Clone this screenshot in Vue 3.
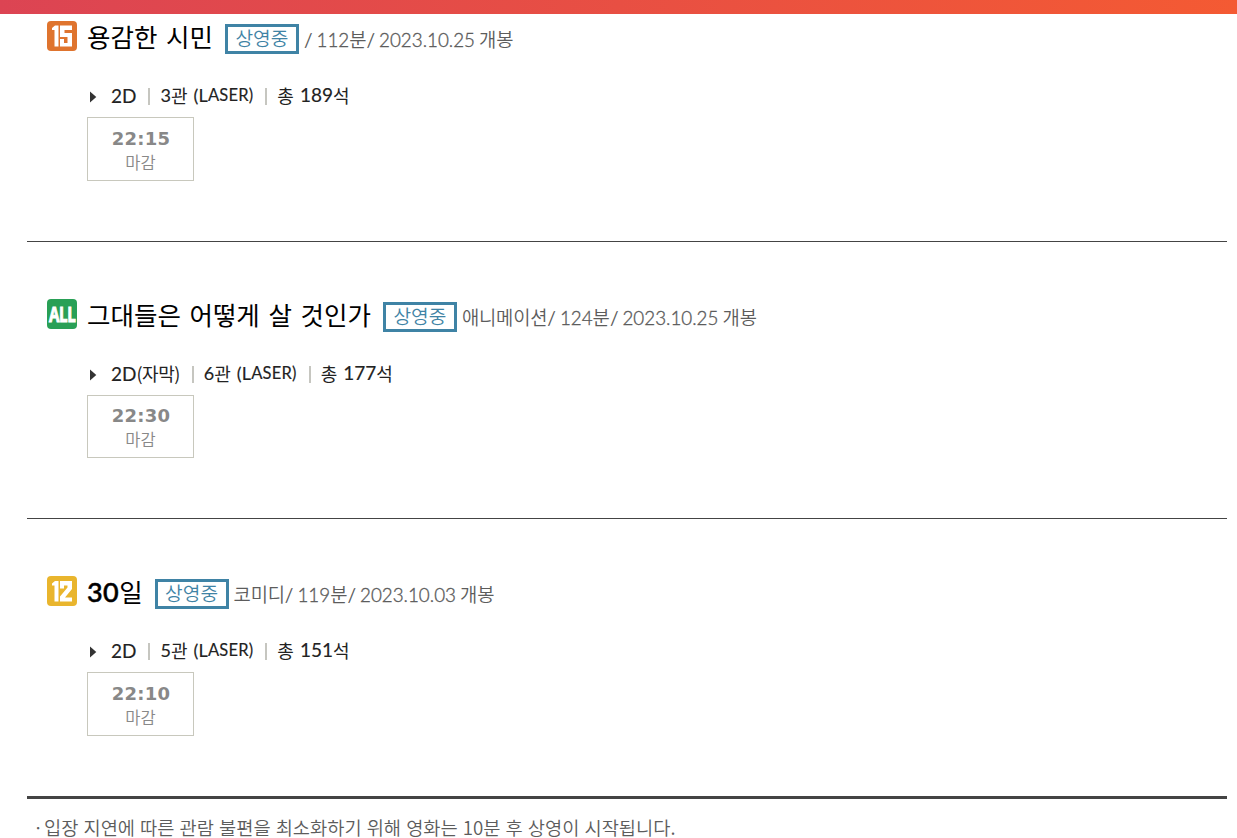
<script setup>
const movies = [
  { id: 'citizen', rate: '15', title: '용감한 시민', genre: '', minutes: '112', date: '2023.10.25', type: '2D', sub: '', hall: '3', seats: '189', time: '22:15' },
  { id: 'heron', rate: 'ALL', title: '그대들은 어떻게 살 것인가', genre: '애니메이션', minutes: '124', date: '2023.10.25', type: '2D', sub: '(자막)', hall: '6', seats: '177', time: '22:30' },
  { id: 'days', rate: '12', num: '30', title: '일', genre: '코미디', minutes: '119', date: '2023.10.03', type: '2D', sub: '', hall: '5', seats: '151', time: '22:10' },
]
</script>

<template>
  <div class="page">
    <div class="topbar"></div>
    <main class="list">
      <section v-for="m in movies" :key="m.id" class="movie" :class="m.id">
        <header class="head">
          <i class="rate" :class="'r' + m.rate">
            <svg v-if="m.rate === '15'" viewBox="0 0 30 30"><path d="M5 7 8 4.5H11.5V25.5H7.5V9H5ZM13 4.5H25V9H17.5V12H25V25.5H13V18H17V22H20.5V16H13Z" fill="#fff" /></svg>
            <svg v-else-if="m.rate === '12'" viewBox="0 0 30 30"><path d="M5 7.5 8 5H11.5V25.5H7.5V9.5H5ZM13 5H25V13L18 21.5H25V25.5H13V20.5L20.5 11.5V9.5H17V12.5H13Z" fill="#fff" /></svg>
            <span v-else class="all">ALL</span>
          </i>
          <h2 class="title"><span v-if="m.num" class="num">{{ m.num }}</span>{{ m.title }}</h2>
          <span class="badge">상영중</span>
          <p class="meta"><span v-if="m.genre" class="genre">{{ m.genre }}</span><b class="slash">/</b><span class="num mins">{{ m.minutes }}</span>분<b class="slash">/</b><span class="num date">{{ m.date }}</span>개봉</p>
        </header>
        <div class="hall">
          <svg class="arrow" viewBox="0 0 7 12"><path d="M0 0.5 6.3 6 0 11.5Z" fill="#333" /></svg>
          <span class="type"><span class="num">{{ m.type }}</span><span class="sub">{{ m.sub }}</span></span>
          <span class="screen"><span class="num">{{ m.hall }}</span>관<span class="num laser">(L<small>ASER)</small></span></span>
          <span class="seats">총<span class="num count">{{ m.seats }}</span>석</span>
        </div>
        <div class="slot"><strong>{{ m.time }}</strong><span>마감</span></div>
      </section>
    </main>
    <p class="note"><span class="dot">·</span>입장 지연에 따른 관람 불편을 최소화하기 위해 영화는 10분 후 상영이 시작됩니다.</p>
  </div>
</template>

<style>
body { margin: 0; background: #fff; }
</style>

<style scoped>
.page { height: 838px; overflow: hidden; font-family: "Noto Sans CJK KR", sans-serif; color: #000; }
.topbar { height: 14px; background: linear-gradient(90deg, #dc4453, #f45a33); }
.list { margin: 0 10px 0 27px; }
.movie { box-sizing: border-box; height: 277px; padding: 57px 0 0 20px; border-bottom: 1px solid #444; }
.movie.citizen { height: 228px; padding-top: 7px; }
.movie.days { height: 280px; border-bottom-width: 3px; }
.head { display: flex; height: 34px; align-items: flex-start; white-space: nowrap; }
.rate { width: 30px; height: 30px; border-radius: 4px; overflow: hidden; font-style: normal; flex: none; }
.rate svg { display: block; width: 30px; height: 30px; }
.r15 { background: #df742e; }
.rALL { background: #29a056; }
.r12 { background: #e9b52d; }
.all { display: block; color: #fff; font: bold 21px/30px "Open Sans", sans-serif; width: 40px; transform: scaleX(.72); transform-origin: 0 0; margin-left: 2px; letter-spacing: -.5px; -webkit-text-stroke: 1px #fff; }
.title { margin: 0 12px 0 10px; font-size: 25.5px; line-height: 30px; font-weight: 400; word-spacing: 2.9px; }
.title .num { font: 500 27px/30px Lato, sans-serif; letter-spacing: .4px; -webkit-text-stroke: .5px #000; }
.num { font-family: Lato, "Noto Sans CJK KR", sans-serif; }
.badge { box-sizing: border-box; width: 74px; height: 30px; margin-top: 3px; border: 3px solid #3f83a5; color: #3f83a5; font-size: 19.2px; font-weight: 350; line-height: 23px; text-align: center; }
.meta { margin: 4px 0 0 5px; color: #5c5c5c; font-size: 18.8px; font-weight: 350; line-height: 28px; }
.genre { letter-spacing: -.2px; }
.slash { font-weight: 400; font-family: Lato, sans-serif; font-size: 19px; margin-right: 4px; }
.meta .num { font-weight: 300; -webkit-text-stroke: .35px #5c5c5c; }
.date { margin-right: 4px; }
.hall { display: flex; align-items: center; height: 28px; margin: 26px 0 0 43px; font-size: 18px; line-height: 28px; color: #222; white-space: nowrap; }
.arrow { width: 7px; height: 12px; margin: 4px 14px 0 0; }
.hall .num { -webkit-text-stroke: .15px #222; }
.type .num { font-size: 19px; }
.sub { letter-spacing: -.5px; }
.screen, .seats { display: flex; align-items: center; }
.screen::before, .seats::before { content: ""; width: 2px; height: 17px; margin: 3px 10px 0 12px; background: #c6c6c0; }
.laser { margin-left: 6px; letter-spacing: .2px; }
.laser small { font-size: 16.5px; position: relative; top: -1px; }
.count { margin-left: 6px; font-size: 19px; }
.slot { box-sizing: border-box; width: 107px; height: 64px; margin: 8px 0 0 40px; border: 1px solid #c8c8bd; color: #888; text-align: center; padding-top: 10px; }
.heron .slot { height: 63px; padding-top: 9px; }
.slot strong { display: block; font: bold 18px/22px "DejaVu Sans", sans-serif; letter-spacing: .2px; padding-left: 1px; }
.slot span { display: block; font-size: 16.5px; line-height: 24px; font-weight: 350; }
.note { margin: 16px 0 0 33px; font-size: 18.7px; line-height: 23px; font-weight: 350; color: #5c5c5c; white-space: nowrap; word-spacing: .9px; }
.dot { display: inline-block; width: 11px; }
</style>
